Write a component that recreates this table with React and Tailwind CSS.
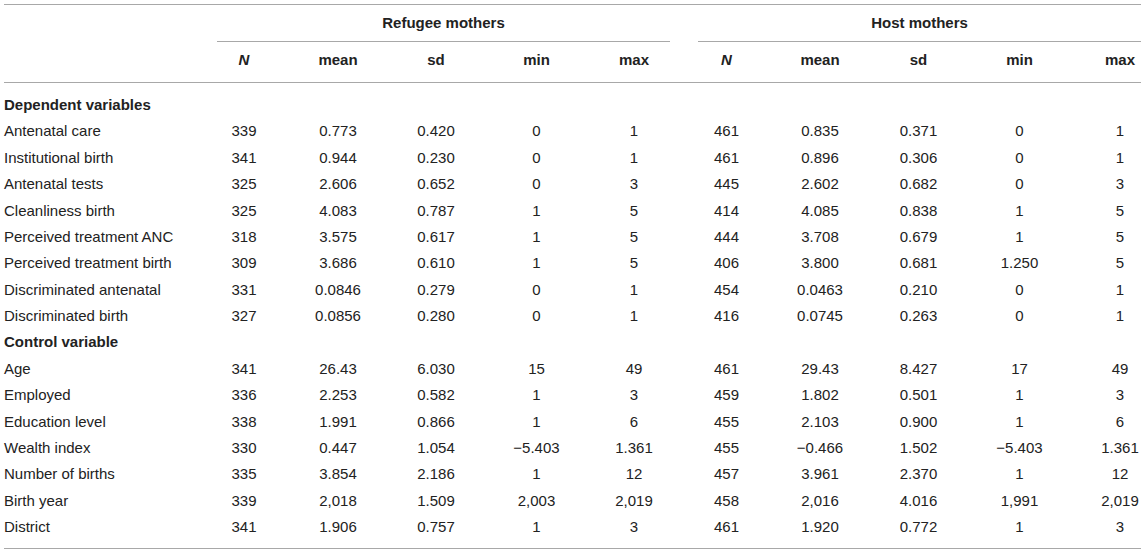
const cols =
  "grid grid-cols-[194px_92px_96px_100px_101px_94px_91px_96px_101px_101px_71px]";

const heads = ["N", "mean", "sd", "min", "max", "N", "mean", "sd", "min", "max"];

const sections = [
  {
    title: "Dependent variables",
    rows: [
      ["Antenatal care", "339", "0.773", "0.420", "0", "1", "461", "0.835", "0.371", "0", "1"],
      ["Institutional birth", "341", "0.944", "0.230", "0", "1", "461", "0.896", "0.306", "0", "1"],
      ["Antenatal tests", "325", "2.606", "0.652", "0", "3", "445", "2.602", "0.682", "0", "3"],
      ["Cleanliness birth", "325", "4.083", "0.787", "1", "5", "414", "4.085", "0.838", "1", "5"],
      ["Perceived treatment ANC", "318", "3.575", "0.617", "1", "5", "444", "3.708", "0.679", "1", "5"],
      ["Perceived treatment birth", "309", "3.686", "0.610", "1", "5", "406", "3.800", "0.681", "1.250", "5"],
      ["Discriminated antenatal", "331", "0.0846", "0.279", "0", "1", "454", "0.0463", "0.210", "0", "1"],
      ["Discriminated birth", "327", "0.0856", "0.280", "0", "1", "416", "0.0745", "0.263", "0", "1"],
    ],
  },
  {
    title: "Control variable",
    rows: [
      ["Age", "341", "26.43", "6.030", "15", "49", "461", "29.43", "8.427", "17", "49"],
      ["Employed", "336", "2.253", "0.582", "1", "3", "459", "1.802", "0.501", "1", "3"],
      ["Education level", "338", "1.991", "0.866", "1", "6", "455", "2.103", "0.900", "1", "6"],
      ["Wealth index", "330", "0.447", "1.054", "\u22125.403", "1.361", "455", "\u22120.466", "1.502", "\u22125.403", "1.361"],
      ["Number of births", "335", "3.854", "2.186", "1", "12", "457", "3.961", "2.370", "1", "12"],
      ["Birth year", "339", "2,018", "1.509", "2,003", "2,019", "458", "2,016", "4.016", "1,991", "2,019"],
      ["District", "341", "1.906", "0.757", "1", "3", "461", "1.920", "0.772", "1", "3"],
    ],
  },
];

// last column is narrower on the right, pad it so the text sits where it should
const cellCls = (i) => (i === 10 ? "pl-[29px] text-center" : "text-center");

export default function App() {
  return (
    <div
      className="bg-white text-[#222] text-[15px] px-[4px] pt-[4px] h-[553px]"
      style={{ fontFamily: '"Liberation Sans", Arial, sans-serif' }}
    >
      <div className="border-t border-b border-[#a8a8a8]">
        {/* group header */}
        <div className="flex h-[37px]">
          <div className="w-[213px]" />
          <div className="w-[453px] border-b border-[#a8a8a8] flex items-center justify-center font-bold">
            Refugee mothers
          </div>
          <div className="w-[28px]" />
          <div className="w-[443px] border-b border-[#a8a8a8] flex items-center justify-center font-bold">
            Host mothers
          </div>
        </div>

        {/* column header */}
        <div className={`${cols} h-[41px] items-center border-b border-[#a8a8a8] font-bold pb-[3px]`}>
          <div />
          {heads.map((h, i) => (
            <div key={i} className={`${cellCls(i + 1)} ${h === "N" ? "italic" : ""}`}>
              {h}
            </div>
          ))}
        </div>

        {/* body */}
        <div className="pt-[9px] pb-[7px]">
          {sections.map((s) => (
            <div key={s.title}>
              <div className="h-[26.4px] flex items-center font-bold">{s.title}</div>
              {s.rows.map((r) => (
                <div key={r[0]} className={`${cols} h-[26.4px] items-center`}>
                  {r.map((v, i) => (
                    <div key={i} className={i === 0 ? "whitespace-nowrap" : cellCls(i)}>
                      {v}
                    </div>
                  ))}
                </div>
              ))}
            </div>
          ))}
        </div>
      </div>
    </div>
  );
}
